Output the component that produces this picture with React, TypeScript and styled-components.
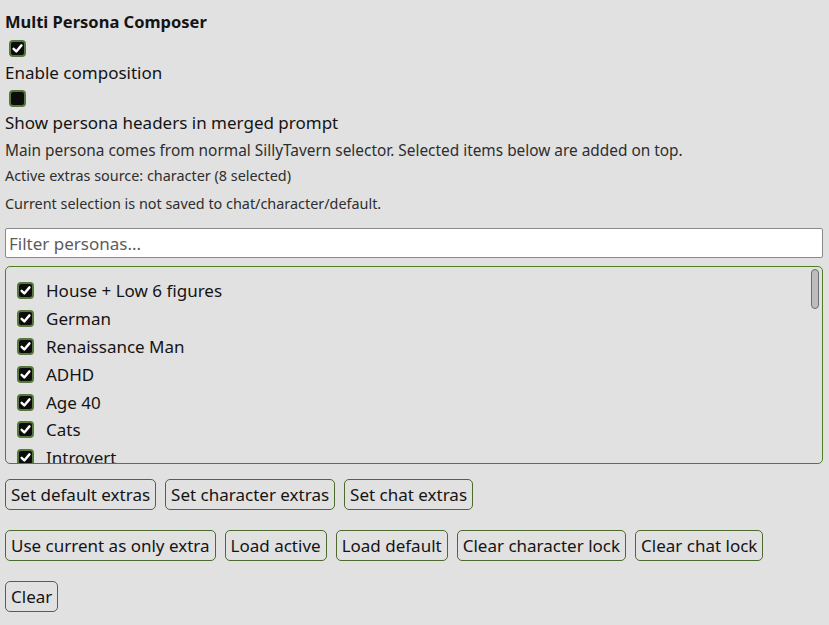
import React from "react";
import styled, { createGlobalStyle } from "styled-components";

const Global = createGlobalStyle`
  html, body { margin: 0; padding: 0; background: #e1e1e1; }
  body { font-family: "Noto Sans", "Open Sans", sans-serif; color: #141414; }
`;

const Page = styled.div`
  padding: 10px 6px 0 5px;
  display: flex;
  flex-direction: column;
`;

const Title = styled.div`
  font-weight: 700;
  font-size: 16.5px;
  line-height: 24px;
`;

const Label = styled.div`
  font-size: 17px;
  line-height: 22px;
`;

const CheckRow = styled.div`
  height: 28px;
  display: flex;
  align-items: center;
  padding-left: 4px;
`;

const Box = styled.span<{ $on: boolean }>`
  width: 17px;
  height: 17px;
  box-sizing: border-box;
  border: 2px solid #56783a;
  border-radius: 4px;
  background: #0c0c0c;
  display: inline-flex;
  align-items: center;
  justify-content: center;
  flex: none;
  svg { display: ${(p) => (p.$on ? "block" : "none")}; }
`;

const Note = styled.div<{ $mt?: number }>`
  font-size: 15.4px;
  line-height: 20px;
  color: #2e2e2e;
  margin-top: ${(p) => p.$mt ?? 0}px;
`;

const Small = styled.div<{ $mt?: number }>`
  font-size: 14.4px;
  line-height: 20px;
  color: #2e2e2e;
  margin-top: ${(p) => p.$mt ?? 0}px;
`;

const Filter = styled.input`
  margin-top: 14px;
  height: 30px;
  box-sizing: border-box;
  border: 1px solid #8a8a8a;
  border-radius: 2px;
  background: #fff;
  font-family: inherit;
  font-size: 17px;
  padding: 0 3px;
  outline: none;
  &::placeholder { color: #5c5c5c; }
`;

const ListFrame = styled.div`
  position: relative;
  margin-top: 8px;
  height: 198px;
  box-sizing: border-box;
  border: 1px solid #4f7f22;
  border-radius: 5px;
  overflow: hidden;
`;

const List = styled.div`
  height: 100%;
  overflow-y: auto;
  box-sizing: border-box;
  padding: 10px 11px 0;
  scrollbar-width: none;
  &::-webkit-scrollbar { display: none; }
`;

const Thumb = styled.div`
  position: absolute;
  top: 2px;
  right: 3px;
  width: 8px;
  height: 40px;
  box-sizing: border-box;
  background: #bdbdbd;
  border: 1px solid #6e6e6e;
  border-radius: 5px;
`;

const Item = styled.div`
  height: 27.8px;
  display: flex;
  align-items: center;
  gap: 12px;
  font-size: 17px;
  white-space: nowrap;
`;

const ButtonRow = styled.div<{ $mt: number }>`
  display: flex;
  flex-wrap: wrap;
  gap: 9px;
  margin-top: ${(p) => p.$mt}px;
`;

const Btn = styled.button`
  height: 31px;
  box-sizing: border-box;
  border: 1px solid #4d6a2e;
  border-radius: 5px;
  background: transparent;
  font-family: inherit;
  font-size: 17px;
  line-height: 22px;
  color: #141414;
  padding: 0 5px;
  cursor: pointer;
`;

const Check = ({ on }: { on: boolean }) => (
  <Box $on={on}>
    <svg width="11" height="11" viewBox="0 0 12 12">
      <path d="M1.8 6.4 L4.7 9.2 L10.3 2.6" fill="none" stroke="#fff" strokeWidth="2.6" strokeLinecap="round" strokeLinejoin="round" />
    </svg>
  </Box>
);

const personas = [
  "House + Low 6 figures",
  "German",
  "Renaissance Man",
  "ADHD",
  "Age 40",
  "Cats",
  "Introvert",
  "Night Owl",
  "Software Engineer",
  "Coffee Lover",
  "Gamer",
  "Hiker",
  "Bookworm",
  "Musician",
  "Home Cook",
  "Traveler",
  "Photographer",
  "Minimalist",
  "Gardener",
  "Sci-Fi Fan",
  "Runner",
  "Dog Person",
  "Early Riser",
  "Extrovert",
  "Student",
  "Artist",
  "Writer",
  "Tinkerer",
  "Collector",
  "Film Buff",
  "Chess Player",
  "Cyclist",
  "Vegetarian",
  "Age 25",
];

export default function App() {
  return (
    <Page>
      <Global />
      <Title>Multi Persona Composer</Title>
      <CheckRow>
        <Check on />
      </CheckRow>
      <Label>Enable composition</Label>
      <CheckRow>
        <Check on={false} />
      </CheckRow>
      <Label>Show persona headers in merged prompt</Label>
      <Note $mt={7}>Main persona comes from normal SillyTavern selector. Selected items below are added on top.</Note>
      <Small $mt={5}>Active extras source: character (8 selected)</Small>
      <Small $mt={8}>Current selection is not saved to chat/character/default.</Small>
      <Filter placeholder="Filter personas..." />
      <ListFrame>
        <List>
          {personas.map((p, i) => (
            <Item key={p}>
              <Check on={i < 8} />
              {p}
            </Item>
          ))}
        </List>
        <Thumb />
      </ListFrame>
      <ButtonRow $mt={15}>
        <Btn>Set default extras</Btn>
        <Btn>Set character extras</Btn>
        <Btn>Set chat extras</Btn>
      </ButtonRow>
      <ButtonRow $mt={20}>
        <Btn>Use current as only extra</Btn>
        <Btn>Load active</Btn>
        <Btn>Load default</Btn>
        <Btn>Clear character lock</Btn>
        <Btn>Clear chat lock</Btn>
      </ButtonRow>
      <ButtonRow $mt={20}>
        <Btn>Clear</Btn>
      </ButtonRow>
    </Page>
  );
}
